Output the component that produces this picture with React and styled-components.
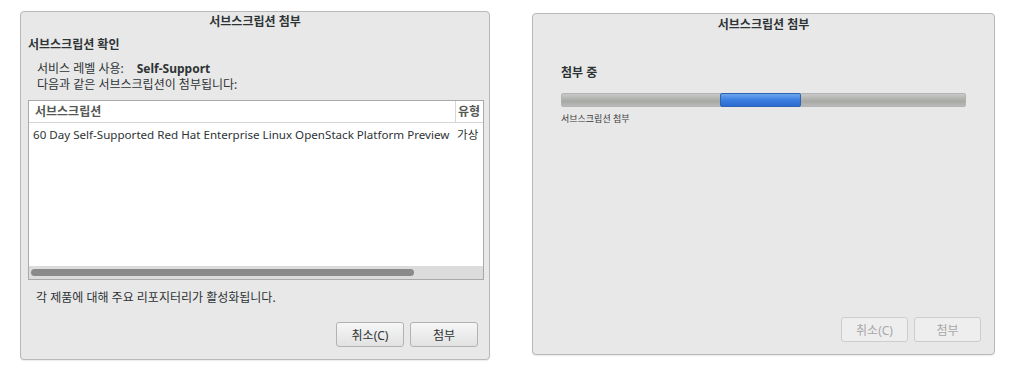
import React from "react";
import styled, { createGlobalStyle } from "styled-components";

const GlobalStyle = createGlobalStyle`
  html, body {
    margin: 0;
    background: #ffffff;
  }
  body {
    font-family: "Noto Sans", "Noto Sans CJK KR", sans-serif;
    color: #2e3436;
  }
`;

const Page = styled.div`
  display: flex;
  align-items: flex-start;
  gap: 42px;
  padding: 11px 0 0 20px;
  width: 1034px;
  height: 373px;
  box-sizing: border-box;
`;

const Dialog = styled.div`
  display: flex;
  flex-direction: column;
  box-sizing: border-box;
  width: ${(p) => p.$w}px;
  height: ${(p) => p.$h}px;
  margin-top: ${(p) => p.$top || 0}px;
  background: #e8e8e8;
  border: 1px solid #b8b8b8;
  border-radius: 4px;
  box-shadow: 0 1px 1px rgba(0, 0, 0, 0.08);
`;

const TitleBar = styled.div`
  height: ${(p) => p.$h}px;
  line-height: ${(p) => p.$h}px;
  text-align: center;
  font-size: 12px;
  font-weight: 700;
  color: #2e3436;
`;

const Body = styled.div`
  flex: 1;
  display: flex;
  flex-direction: column;
  padding: ${(p) => p.$pad};
`;

const Heading = styled.div`
  font-size: 12px;
  font-weight: 700;
  line-height: 16px;
  margin-top: ${(p) => p.$mt}px;
`;

const Info = styled.div`
  margin: 8px 0 0 9px;
  font-size: 12px;
  line-height: 16px;
`;

const Strong = styled.span`
  font-weight: 700;
  margin-left: 13px;
`;

const ListBox = styled.div`
  margin-top: 7px;
  height: 180px;
  box-sizing: border-box;
  border: 1px solid #a9a9a9;
  background: #ffffff;
  display: flex;
  flex-direction: column;
  overflow: hidden;
`;

const ListRow = styled.div`
  display: grid;
  grid-template-columns: 1fr 28px;
  font-size: ${(p) => (p.$header ? "12px" : "11.6px")};
  line-height: ${(p) => p.$h}px;
  border-bottom: ${(p) => (p.$header ? "1px solid #d6d6d6" : "none")};
  color: ${(p) => (p.$header ? "#555753" : "#2e3436")};
  font-weight: ${(p) => (p.$header ? 700 : 400)};
  white-space: nowrap;
`;

const Cell = styled.div`
  padding-left: ${(p) => p.$pl}px;
  overflow: hidden;
  border-left: ${(p) => (p.$sep ? "1px solid #d6d6d6" : "none")};
`;

const ListFill = styled.div`
  flex: 1;
`;

const ScrollTrack = styled.div`
  height: 13px;
  background: #dcdcdc;
  display: flex;
  align-items: center;
  padding-left: 2px;
`;

const ScrollThumb = styled.div`
  width: 383px;
  height: 7px;
  border-radius: 4px;
  background: #8a8a8a;
`;

const Note = styled.div`
  margin: 10px 0 0 8px;
  font-size: 12px;
  line-height: 16px;
`;

const ButtonRow = styled.div`
  margin-top: auto;
  display: flex;
  justify-content: flex-end;
  gap: 6px;
  margin-right: ${(p) => p.$mr}px;
`;

const Button = styled.button`
  width: ${(p) => p.$w}px;
  height: ${(p) => p.$h}px;
  box-sizing: border-box;
  font-family: inherit;
  font-size: 12px;
  border-radius: 3px;
  border: 1px solid ${(p) => (p.disabled ? "#cdcdcd" : "#b2b2b2")};
  background: ${(p) =>
    p.disabled
      ? "#eeeeee"
      : "linear-gradient(#f6f6f6, #e2e2e2)"};
  color: ${(p) => (p.disabled ? "#a8a8a8" : "#2e3436")};
  padding: 0;
`;

const Progress = styled.div`
  margin-top: 12px;
  height: 14px;
  box-sizing: border-box;
  border: 1px solid #b3b3b3;
  border-radius: 2px;
  background: linear-gradient(#c9cac8, #a7a9a5 60%, #b9bab8);
  position: relative;
`;

const ProgressPulse = styled.div`
  position: absolute;
  top: -1px;
  left: 158px;
  width: 81px;
  height: 14px;
  box-sizing: border-box;
  border: 1px solid #2f63b4;
  border-radius: 2px;
  background: linear-gradient(#6ea6ee, #3c7fe0 50%, #2d6bcf);
`;

const SmallLabel = styled.div`
  margin-top: 6px;
  font-size: 9px;
  line-height: 12px;
  color: #3a3a3a;
`;

export default function App() {
  return (
    <>
      <GlobalStyle />
      <Page>
        <Dialog $w={470} $h={349}>
          <TitleBar $h={19}>서브스크립션 첨부</TitleBar>
          <Body $pad="0 5px 12px 7px">
            <Heading $mt={6}>서브스크립션 확인</Heading>
            <Info>
              <div>
                서비스 레벨 사용:<Strong>Self-Support</Strong>
              </div>
              <div>다음과 같은 서브스크립션이 첨부됩니다:</div>
            </Info>
            <ListBox>
              <ListRow $header $h={21}>
                <Cell $pl={6}>서브스크립션</Cell>
                <Cell $pl={2} $sep>
                  유형
                </Cell>
              </ListRow>
              <ListRow $h={24}>
                <Cell $pl={4}>
                  60 Day Self-Supported Red Hat Enterprise Linux OpenStack
                  Platform Preview
                </Cell>
                <Cell $pl={2}>가상</Cell>
              </ListRow>
              <ListFill />
              <ScrollTrack>
                <ScrollThumb />
              </ScrollTrack>
            </ListBox>
            <Note>각 제품에 대해 주요 리포지터리가 활성화됩니다.</Note>
            <ButtonRow $mr={6}>
              <Button $w={68} $h={25}>취소(C)</Button>
              <Button $w={68} $h={25}>첨부</Button>
            </ButtonRow>
          </Body>
        </Dialog>

        <Dialog $w={463} $h={342} $top={2}>
          <TitleBar $h={22}>서브스크립션 첨부</TitleBar>
          <Body $pad="0 28px 12px 28px">
            <Heading $mt={29}>첨부 중</Heading>
            <Progress>
              <ProgressPulse />
            </Progress>
            <SmallLabel>서브스크립션 첨부</SmallLabel>
            <ButtonRow $mr={-15}>
              <Button $w={67} $h={25} disabled>
                취소(C)
              </Button>
              <Button $w={67} $h={25} disabled>
                첨부
              </Button>
            </ButtonRow>
          </Body>
        </Dialog>
      </Page>
    </>
  );
}
